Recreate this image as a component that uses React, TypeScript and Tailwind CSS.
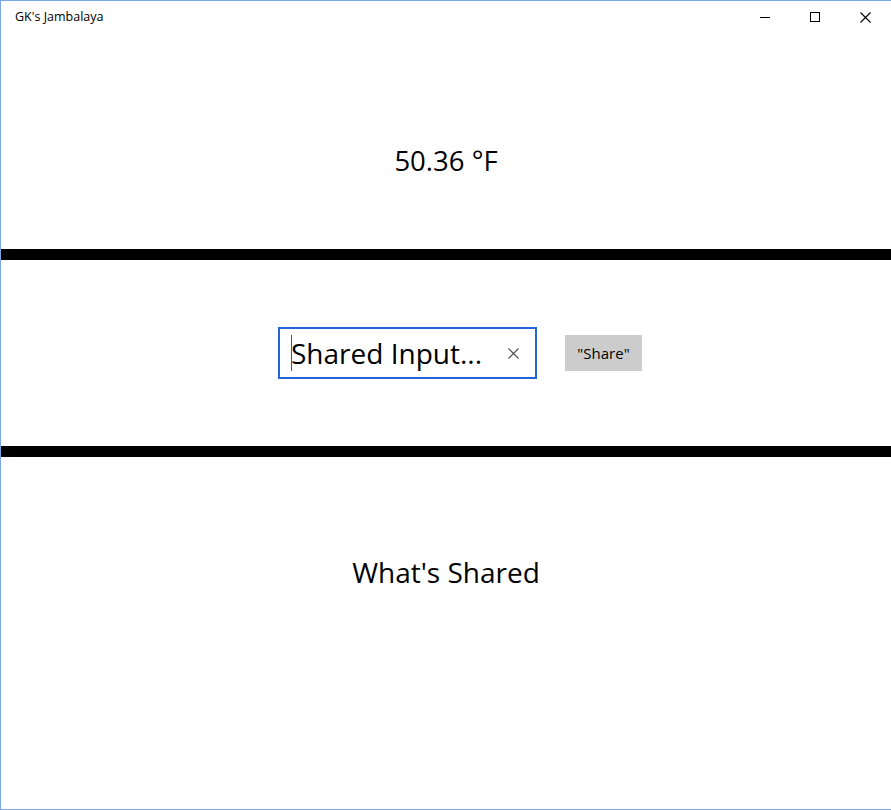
import { useState } from "react";

const font = { fontFamily: '"Open Sans", "Noto Sans", sans-serif' };

function TitleBar() {
  return (
    <div className="flex h-[32px] items-center justify-between">
      <span className="pl-[14px] text-[12.5px] text-black">GK's Jambalaya</span>
      <div className="flex h-full pr-px">
        <div className="flex h-full w-[50px] items-center justify-center">
          <svg width="10" height="10" viewBox="0 0 10 10">
            <path d="M0 5.5h10" stroke="#000" strokeWidth="1" />
          </svg>
        </div>
        <div className="flex h-full w-[50px] items-center justify-center">
          <svg width="10" height="10" viewBox="0 0 10 10">
            <rect x="0.5" y="0.5" width="9" height="9" fill="none" stroke="#000" strokeWidth="1" />
          </svg>
        </div>
        <div className="flex h-full w-[50px] items-center justify-center">
          <svg width="11" height="11" viewBox="0 0 11 11">
            <path d="M0.5 0.5l10 10M10.5 0.5l-10 10" stroke="#000" strokeWidth="1.1" />
          </svg>
        </div>
      </div>
    </div>
  );
}

export default function App() {
  const [text, setText] = useState("");
  const [shared, setShared] = useState("What's Shared");

  return (
    <div
      className="flex h-[810px] w-[891px] flex-col overflow-hidden border-t border-b border-l border-[#7aa6e8] bg-white text-black"
      style={font}
    >
      <TitleBar />

      {/* temperature */}
      <div className="flex h-[216px] items-start justify-center pt-[114px]">
        <span className="text-[27.5px] leading-none">50.36 °F</span>
      </div>

      <div className="h-[11px] bg-black" />

      {/* input row */}
      <div className="flex h-[186px] items-center justify-center gap-[28px] pl-[28px]">
        <div className="relative flex h-[52px] w-[259px] items-center border-2 border-[#2463d8]">
          <input
            value={text}
            onChange={(e) => setText(e.target.value)}
            placeholder="Shared Input..."
            className="h-full w-full bg-transparent pl-[11px] pr-[40px] text-[28px] text-black caret-black outline-none placeholder:text-black"
          />
          {text === "" && (
            <span className="pointer-events-none absolute left-[11px] top-[6px] h-[36px] w-px bg-[#555]" />
          )}
          <span className="pointer-events-none absolute right-[16px] top-[19px]">
            <svg width="11" height="11" viewBox="0 0 11 11">
              <path d="M0.5 0.5l10 10M10.5 0.5l-10 10" stroke="#555" strokeWidth="1.2" />
            </svg>
          </span>
        </div>
        <button
          onClick={() => setShared(text || "What's Shared")}
          className="h-[36px] w-[77px] bg-[#cccccc] text-[15px] text-black"
        >
          "Share"
        </button>
      </div>

      <div className="h-[11px] bg-black" />

      {/* shared output */}
      <div className="flex flex-1 items-start justify-center pt-[101px]">
        <span className="text-[28px] leading-none">{shared}</span>
      </div>
    </div>
  );
}
